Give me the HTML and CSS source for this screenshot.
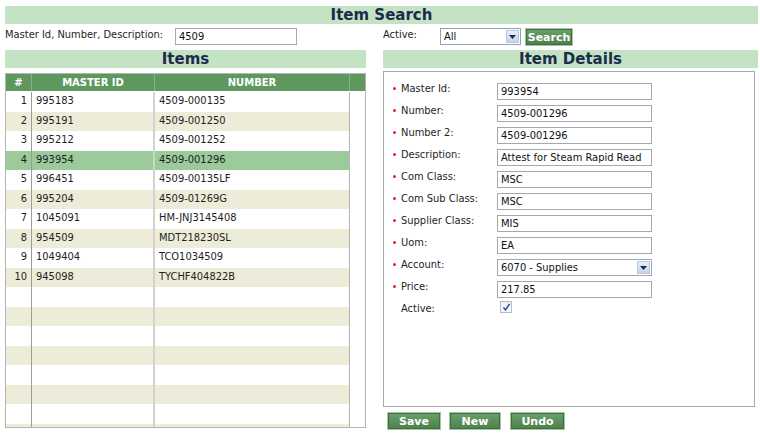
FILE: index.html
```html
<!DOCTYPE html>
<html>
<head>
<meta charset="utf-8">
<link rel="stylesheet" href="styles.css">
</head>
<body>
<div class="page">
  <div class="bar bar-main">Item Search</div>
  <div class="search-row">
    <div class="search-left">
      <span class="lbl search-lbl">Master Id, Number, Description:</span>
      <input class="txt search-txt" type="text" value="4509">
    </div>
    <div class="search-right">
      <span class="lbl active-lbl">Active:</span>
      <div class="sel sel-active"><span class="sel-val">All</span><span class="sel-arrow"><svg width="7" height="4" viewBox="0 0 7 4"><path d="M0 0h7L3.5 4z" fill="#1d2b4a"/></svg></span></div>
      <button class="btn btn-search">Search</button>
    </div>
  </div>
  <div class="cols">
    <div class="col-left">
      <div class="bar">Items</div>
      <div class="grid">
        <div class="ghead">
          <div class="hc c1">#</div>
          <div class="hc c2">MASTER ID</div>
          <div class="hc c3">NUMBER</div>
          <div class="hc c4"></div>
        </div>
        <div class="gbody">
          <div class="rows">
            <div class="row"><div class="c c1">1</div><div class="c c2">995183</div><div class="c c3">4509-000135</div></div>
            <div class="row"><div class="c c1">2</div><div class="c c2">995191</div><div class="c c3">4509-001250</div></div>
            <div class="row"><div class="c c1">3</div><div class="c c2">995212</div><div class="c c3">4509-001252</div></div>
            <div class="row sel-row"><div class="c c1">4</div><div class="c c2">993954</div><div class="c c3">4509-001296</div></div>
            <div class="row"><div class="c c1">5</div><div class="c c2">996451</div><div class="c c3">4509-00135LF</div></div>
            <div class="row"><div class="c c1">6</div><div class="c c2">995204</div><div class="c c3">4509-01269G</div></div>
            <div class="row"><div class="c c1">7</div><div class="c c2">1045091</div><div class="c c3">HM-JNJ3145408</div></div>
            <div class="row"><div class="c c1">8</div><div class="c c2">954509</div><div class="c c3">MDT218230SL</div></div>
            <div class="row"><div class="c c1">9</div><div class="c c2">1049404</div><div class="c c3">TCO1034509</div></div>
            <div class="row"><div class="c c1">10</div><div class="c c2">945098</div><div class="c c3">TYCHF404822B</div></div>
            <div class="row"><div class="c c1"></div><div class="c c2"></div><div class="c c3"></div></div>
            <div class="row"><div class="c c1"></div><div class="c c2"></div><div class="c c3"></div></div>
            <div class="row"><div class="c c1"></div><div class="c c2"></div><div class="c c3"></div></div>
            <div class="row"><div class="c c1"></div><div class="c c2"></div><div class="c c3"></div></div>
            <div class="row"><div class="c c1"></div><div class="c c2"></div><div class="c c3"></div></div>
            <div class="row"><div class="c c1"></div><div class="c c2"></div><div class="c c3"></div></div>
            <div class="row"><div class="c c1"></div><div class="c c2"></div><div class="c c3"></div></div>
            <div class="row"><div class="c c1"></div><div class="c c2"></div><div class="c c3"></div></div>
          </div>
          <div class="scroll-gap"></div>
        </div>
      </div>
    </div>
    <div class="col-right">
      <div class="bar">Item Details</div>
      <div class="details">
        <div class="frow"><span class="flbl req">Master Id:</span><input class="txt ftxt" type="text" value="993954"></div>
        <div class="frow"><span class="flbl req">Number:</span><input class="txt ftxt" type="text" value="4509-001296"></div>
        <div class="frow"><span class="flbl req">Number 2:</span><input class="txt ftxt" type="text" value="4509-001296"></div>
        <div class="frow"><span class="flbl req">Description:</span><input class="txt ftxt" type="text" value="Attest for Steam Rapid Read"></div>
        <div class="frow"><span class="flbl req">Com Class:</span><input class="txt ftxt" type="text" value="MSC"></div>
        <div class="frow"><span class="flbl req">Com Sub Class:</span><input class="txt ftxt" type="text" value="MSC"></div>
        <div class="frow"><span class="flbl req">Supplier Class:</span><input class="txt ftxt" type="text" value="MIS"></div>
        <div class="frow"><span class="flbl req">Uom:</span><input class="txt ftxt" type="text" value="EA"></div>
        <div class="frow"><span class="flbl req">Account:</span><div class="sel sel-acct"><span class="sel-val">6070 - Supplies</span><span class="sel-arrow"><svg width="7" height="4" viewBox="0 0 7 4"><path d="M0 0h7L3.5 4z" fill="#1d2b4a"/></svg></span></div></div>
        <div class="frow"><span class="flbl req">Price:</span><input class="txt ftxt" type="text" value="217.85"></div>
        <div class="frow"><span class="flbl">Active:</span><span class="chk"><svg width="9" height="9" viewBox="0 0 9 9"><path d="M1.5 4.5L3.5 7L7.5 1" fill="none" stroke="#2d4fa0" stroke-width="1.5"/></svg></span></div>
      </div>
      <div class="actions">
        <button class="btn btn-save">Save</button>
        <button class="btn btn-new">New</button>
        <button class="btn btn-undo">Undo</button>
      </div>
    </div>
  </div>
</div>
</body>
</html>
```
FILE: styles.css
```css
html, body {
  margin: 0;
  padding: 0;
  background: #ffffff;
}
body {
  font-family: "DejaVu Sans Condensed", "DejaVu Sans", sans-serif;
  font-size: 11px;
  color: #1e1e1e;
}
.page {
  width: 753px;
  padding: 6px 2px 0 5px;
}
.bar {
  height: 18px;
  line-height: 18px;
  background: #c4e3c4;
  text-align: center;
  font-family: "DejaVu Sans", sans-serif;
  font-weight: bold;
  font-size: 15px;
  color: #1c2a4c;
}
.search-row {
  display: flex;
  margin-top: 4px;
  height: 18px;
}
.search-left {
  width: 378px;
  display: flex;
  align-items: flex-start;
}
.search-lbl {
  width: 170px;
  line-height: 13px;
}
.search-txt {
  width: 122px;
}
.search-right {
  display: flex;
  align-items: flex-start;
}
.active-lbl {
  width: 57px;
  line-height: 13px;
}
.txt {
  box-sizing: border-box;
  height: 17px;
  border: 1px solid #a5a9ad;
  padding: 0 3px;
  margin: 0;
  font-family: "DejaVu Sans Condensed", "DejaVu Sans", sans-serif;
  font-size: 11px;
  color: #111;
  background: #fff;
  outline: none;
}
.sel {
  box-sizing: border-box;
  height: 17px;
  border: 1px solid #a5a9ad;
  display: flex;
  align-items: center;
  justify-content: space-between;
  padding: 0 1px 0 3px;
  background: #fff;
  color: #111;
}
.sel-active {
  width: 81px;
  border-color: #8fa3b8;
}
.sel-arrow {
  box-sizing: border-box;
  width: 13px;
  height: 13px;
  border: 1px solid #b7c8de;
  background: linear-gradient(#e9eff9, #c5d4ec);
  display: flex;
  align-items: center;
  justify-content: center;
}
.btn {
  box-sizing: border-box;
  height: 18px;
  border: 1px solid #a4c4a4;
  background: linear-gradient(#6b9f6b, #4b804b);
  color: #fff;
  font-family: "DejaVu Sans", sans-serif;
  font-weight: bold;
  font-size: 11px;
  padding: 0;
  margin: 0;
  box-shadow: inset 0 0 0 1px #3e6f3e;
}
.btn-search {
  width: 48px;
  margin-left: 4px;
}
.cols {
  display: flex;
  margin-top: 4px;
  gap: 17px;
}
.col-left {
  width: 361px;
}
.col-right {
  width: 375px;
}
.grid {
  margin-top: 5px;
  height: 355px;
  box-sizing: border-box;
  border: 1px solid #b3b3b3;
  display: flex;
  flex-direction: column;
  overflow: hidden;
}
.ghead {
  display: flex;
  height: 17px;
  flex: none;
  background: #5f985f;
}
.hc {
  box-sizing: border-box;
  height: 17px;
  line-height: 17px;
  color: #fff;
  font-family: "DejaVu Sans", sans-serif;
  font-weight: bold;
  font-size: 10px;
  text-align: center;
  border-right: 1px solid #8cb08c;
}
.hc.c4 {
  border-right: none;
}
.c1 { width: 26px; }
.c2 { width: 123px; }
.c3 { width: 195px; }
.c4 { width: 15px; }
.gbody {
  display: flex;
  flex: 1;
  min-height: 0;
  margin-top: 1px;
}
.rows {
  width: 344px;
  overflow: hidden;
}
.scroll-gap {
  flex: 1;
  background: #fff;
}
.row {
  display: flex;
  height: 19.5px;
  background: #fff;
}
.row:nth-child(even) {
  background: #edecd8;
}
.row.sel-row {
  background: #9bcb9b;
}
.c {
  box-sizing: border-box;
  height: 19.5px;
  line-height: 17px;
  padding-left: 4px;
  white-space: nowrap;
}
.c.c1 {
  text-align: right;
  padding: 0 4px 0 0;
  border-right: 1px solid #9c9c9c;
}
.c.c2 {
  border-right: 2px solid #d2d2d2;
}
.c.c3 {
  border-right: 1px solid #b4b4b4;
}
.details {
  margin-top: 3px;
  width: 372px;
  height: 336px;
  box-sizing: border-box;
  border: 1px solid #a9a9a9;
  padding: 11px 0 0 9px;
}
.frow {
  display: flex;
  align-items: flex-start;
  height: 22px;
}
.flbl {
  width: 104px;
  padding-left: 8px;
  box-sizing: border-box;
  position: relative;
  line-height: 13px;
  margin-top: -1px;
}
.flbl.req::before {
  content: "";
  position: absolute;
  left: 0;
  top: 5px;
  width: 3px;
  height: 3px;
  border-radius: 50%;
  background: #e0261f;
}
.ftxt {
  width: 155px;
}
.sel-acct {
  width: 155px;
}
.chk {
  box-sizing: border-box;
  width: 12px;
  height: 12px;
  margin: -2px 0 0 3px;
  border: 1px solid #b6bcc6;
  background: linear-gradient(#eef0f5, #fbfbfd);
  display: flex;
  align-items: center;
  justify-content: center;
}
.actions {
  display: flex;
  gap: 8px;
  margin-top: 5px;
  padding-left: 4px;
}
.btn-save { width: 54px; }
.btn-new { width: 52px; }
.btn-undo { width: 55px; margin-left: 1px; }
```
